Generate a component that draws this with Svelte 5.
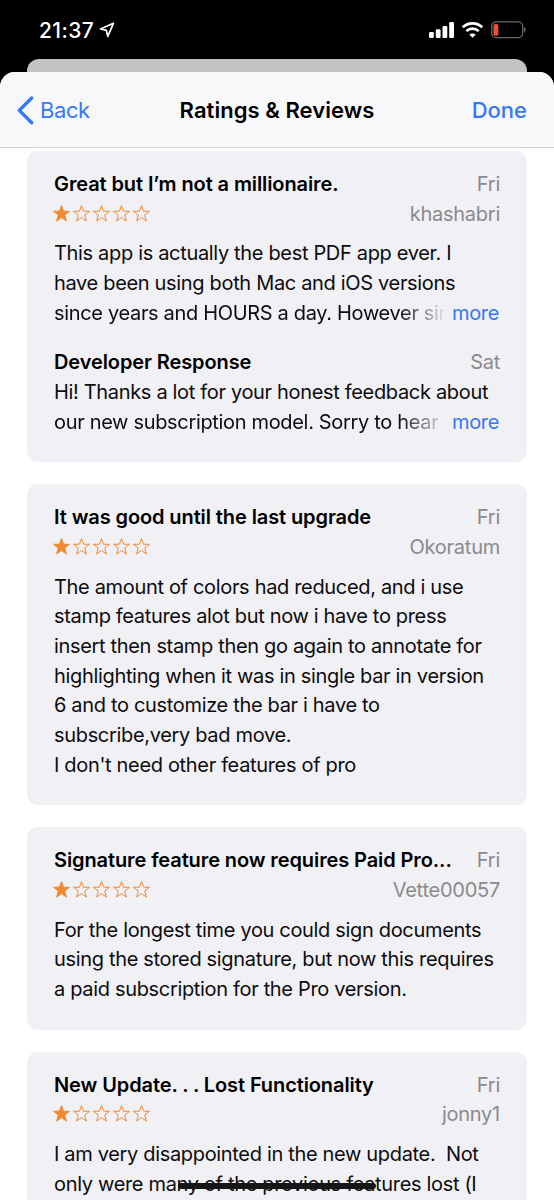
<script lang="ts">
	interface Response { date: string; lines: string[]; }
	interface Review {
		title: string;
		date: string;
		author: string;
		rating: number;
		lines: string[];
		more?: boolean;
		response?: Response;
	}

	const STAR = 'M8.5.6l2 5.6 6 .1-4.8 3.7 1.7 6-4.9-3.5L3.6 16l1.7-6L.5 6.3l6-.1z';

	const reviews: Review[] = [
		{
			title: 'Great but I’m not a millionaire.',
			date: 'Fri',
			author: 'khashabri',
			rating: 1,
			lines: [
				'This app is actually the best PDF app ever. I',
				'have been using both Mac and iOS versions',
				'since years and HOURS a day. However sin',
			],
			more: true,
			response: {
				date: 'Sat',
				lines: [
					'Hi! Thanks a lot for your honest feedback about',
					'our new subscription model. Sorry to hear',
				],
			},
		},
		{
			title: 'It was good until the last upgrade',
			date: 'Fri',
			author: 'Okoratum',
			rating: 1,
			lines: [
				'The amount of colors had reduced, and i use',
				'stamp features alot but now i have to press',
				'insert then stamp then go again to annotate for',
				'highlighting when it was in single bar in version',
				'6 and to customize the bar i have to',
				'subscribe,very bad move.',
				'I don\'t need other features of pro',
			],
		},
		{
			title: 'Signature feature now requires Paid Pro...',
			date: 'Fri',
			author: 'Vette00057',
			rating: 1,
			lines: [
				'For the longest time you could sign documents',
				'using the stored signature, but now this requires',
				'a paid subscription for the Pro version.',
			],
		},
		{
			title: 'New Update. . . Lost Functionality',
			date: 'Fri',
			author: 'jonny1',
			rating: 1,
			lines: [
				'I am very disappointed in the new update.  Not',
				'only were many of the previous features lost (I',
			],
		},
	];
</script>

{#snippet body(lines: string[], more: boolean)}
	<div class="text">
		{#each lines as line, i}
			{#if more && i === lines.length - 1}
				<div class="last">
					<span class="fade">{line}</span>
					<button class="more">more</button>
				</div>
			{:else}
				<p>{line}</p>
			{/if}
		{/each}
	</div>
{/snippet}

<div class="screen">
	<div class="status">
		<span class="time">21:37</span>
		<svg class="location" width="16" height="16" viewBox="0 0 16 16">
			<path d="M14.4 1.3L1.5 7l5.9 1.4 1.4 5.9z" fill="none" stroke="#fff" stroke-width="1.7" stroke-linejoin="round" />
		</svg>
		<div class="indicators">
			<svg width="25" height="16" viewBox="0 0 25 16" fill="#fff">
				<rect x="0" y="10" width="4.8" height="6" rx="1.2" />
				<rect x="6.8" y="7.3" width="4.8" height="8.7" rx="1.2" />
				<rect x="13.5" y="3.9" width="4.8" height="12.1" rx="1.2" />
				<rect x="20.2" y="0" width="4.8" height="16" rx="1.2" />
			</svg>
			<svg width="21" height="16" viewBox="0 0 21 16" fill="none" stroke="#fff" stroke-width="2.7">
				<path d="M.8 5.3C6 .1 15 .1 20.2 5.3" />
				<path d="M4.4 9.1c3.3-3.3 8.9-3.3 12.2 0" />
				<path d="M10.5 15.8l-3.2-3.2c1.7-1.6 4.7-1.6 6.4 0z" fill="#fff" stroke="none" />
			</svg>
			<svg width="35" height="18" viewBox="0 0 35 18">
				<rect x=".7" y=".9" width="31" height="15.7" rx="4.3" fill="none" stroke="#68686a" stroke-width="1.3" />
				<rect x="2.4" y="2.9" width="5" height="11.8" rx="1.8" fill="#ec4e3c" />
				<path d="M33 6.1c2.2.8 2.2 4.5 0 5.3z" fill="#68686a" />
			</svg>
		</div>
	</div>

	<div class="behind"></div>

	<div class="sheet">
		<header>
			<button class="back">
				<svg width="17" height="29" viewBox="0 0 17 29">
					<path d="M14.7 2L2.3 14.4l12.4 12.4" fill="none" stroke="#3478f6" stroke-width="3.4" stroke-linecap="round" stroke-linejoin="round" />
				</svg>
				<span>Back</span>
			</button>
			<h1>Ratings &amp; Reviews</h1>
			<button class="done">Done</button>
		</header>

		<main>
			{#each reviews as review}
				<article>
					<div class="row">
						<h2>{review.title}</h2>
						<span class="meta">{review.date}</span>
					</div>
					<div class="row">
						<div class="stars">
							{#each [1, 2, 3, 4, 5] as n}
								<svg class:filled={n <= review.rating} width="17" height="17" viewBox="0 0 17 17">
									<path d={STAR} />
								</svg>
							{/each}
						</div>
						<span class="meta">{review.author}</span>
					</div>
					{@render body(review.lines, review.more ?? false)}
					{#if review.response}
						<div class="row response">
							<h2>Developer Response</h2>
							<span class="meta">{review.response.date}</span>
						</div>
						<div class="reply">
							{@render body(review.response.lines, true)}
						</div>
					{/if}
				</article>
			{/each}
		</main>
	</div>

	<div class="home"></div>
</div>

<style>
	:global(body) { margin:0; background:#000; }
	.screen {
		position:relative; width:554px; height:1200px; overflow:hidden;
		display:flex; flex-direction:column; background:#000;
		font-family:Inter, "Liberation Sans", sans-serif; color:#0c0c0e;
	}
	h1, h2, p { margin:0; }
	button { padding:0; border:0; background:none; font:inherit; letter-spacing:inherit; color:#3478f6; }
	svg { display:block; flex:none; overflow:visible; }

	.status {
		flex:none; height:59px; box-sizing:border-box; padding:0 29px 0 39px;
		display:flex; align-items:center; color:#fff;
	}
	.time { font-size:21px; font-weight:500; letter-spacing:.4px; margin-top:2px; }
	.location { margin:1px 0 0 5px; }
	.indicators { margin:1px -1px 0 auto; display:flex; align-items:center; gap:8px; }

	.behind { flex:none; height:13px; margin:0 27px; border-radius:12px 12px 0 0; background:#c2c3c5; }

	.sheet {
		flex:1; min-height:0; overflow:hidden; background:#fff;
		border-radius:15px 15px 0 0; display:flex; flex-direction:column;
	}
	header {
		flex:none; height:76px; box-sizing:border-box; padding:1px 27px 0 17px;
		display:grid; grid-template-columns:1fr auto 1fr; align-items:center;
		background:#f8f8fa; border-bottom:1px solid #d5d5d8;
		font-size:22px;
	}
	.back { display:flex; align-items:center; gap:6px; letter-spacing:-.4px; }
	h1 { font-size:22px; font-weight:600; letter-spacing:.05px; color:#000; margin-right:-10px; }
	.done { justify-self:end; font-weight:500; }

	main { padding:3px 27px 0; display:flex; flex-direction:column; gap:22px; }
	article {
		flex:none; padding:19px 27px 25px; border-radius:11px; background:#f1f0f5;
		font-size:20px; line-height:29.67px; letter-spacing:-.33px;
	}
	.row { display:flex; justify-content:space-between; align-items:center; }
	h2 { font-size:20px; font-weight:600; letter-spacing:-.1px; color:#000; white-space:pre; }
	.meta { color:#8a8a8e; letter-spacing:-.25px; }
	.stars { display:flex; gap:3px; margin:-3px 0 0 -1px; }
	.stars path { fill:none; stroke:#ef8a32; stroke-width:1; }
	.stars .filled path { fill:#ef8a32; }
	.row + .text { margin-top:10px; }
	.text { margin-top:10px; }
	.reply .text { margin-top:0; }
	.response { margin-top:20px; }
	p { white-space:pre; }
	.last { display:flex; justify-content:space-between; }
	.fade {
		white-space:pre;
		-webkit-mask-image:linear-gradient(90deg, #000 345px, transparent 393px);
		mask-image:linear-gradient(90deg, #000 345px, transparent 393px);
	}
	.more { margin-right:1px; }

	.home {
		position:absolute; left:178px; top:1183px; width:198px; height:6px;
		border-radius:3px; background:#161618;
	}
</style>
